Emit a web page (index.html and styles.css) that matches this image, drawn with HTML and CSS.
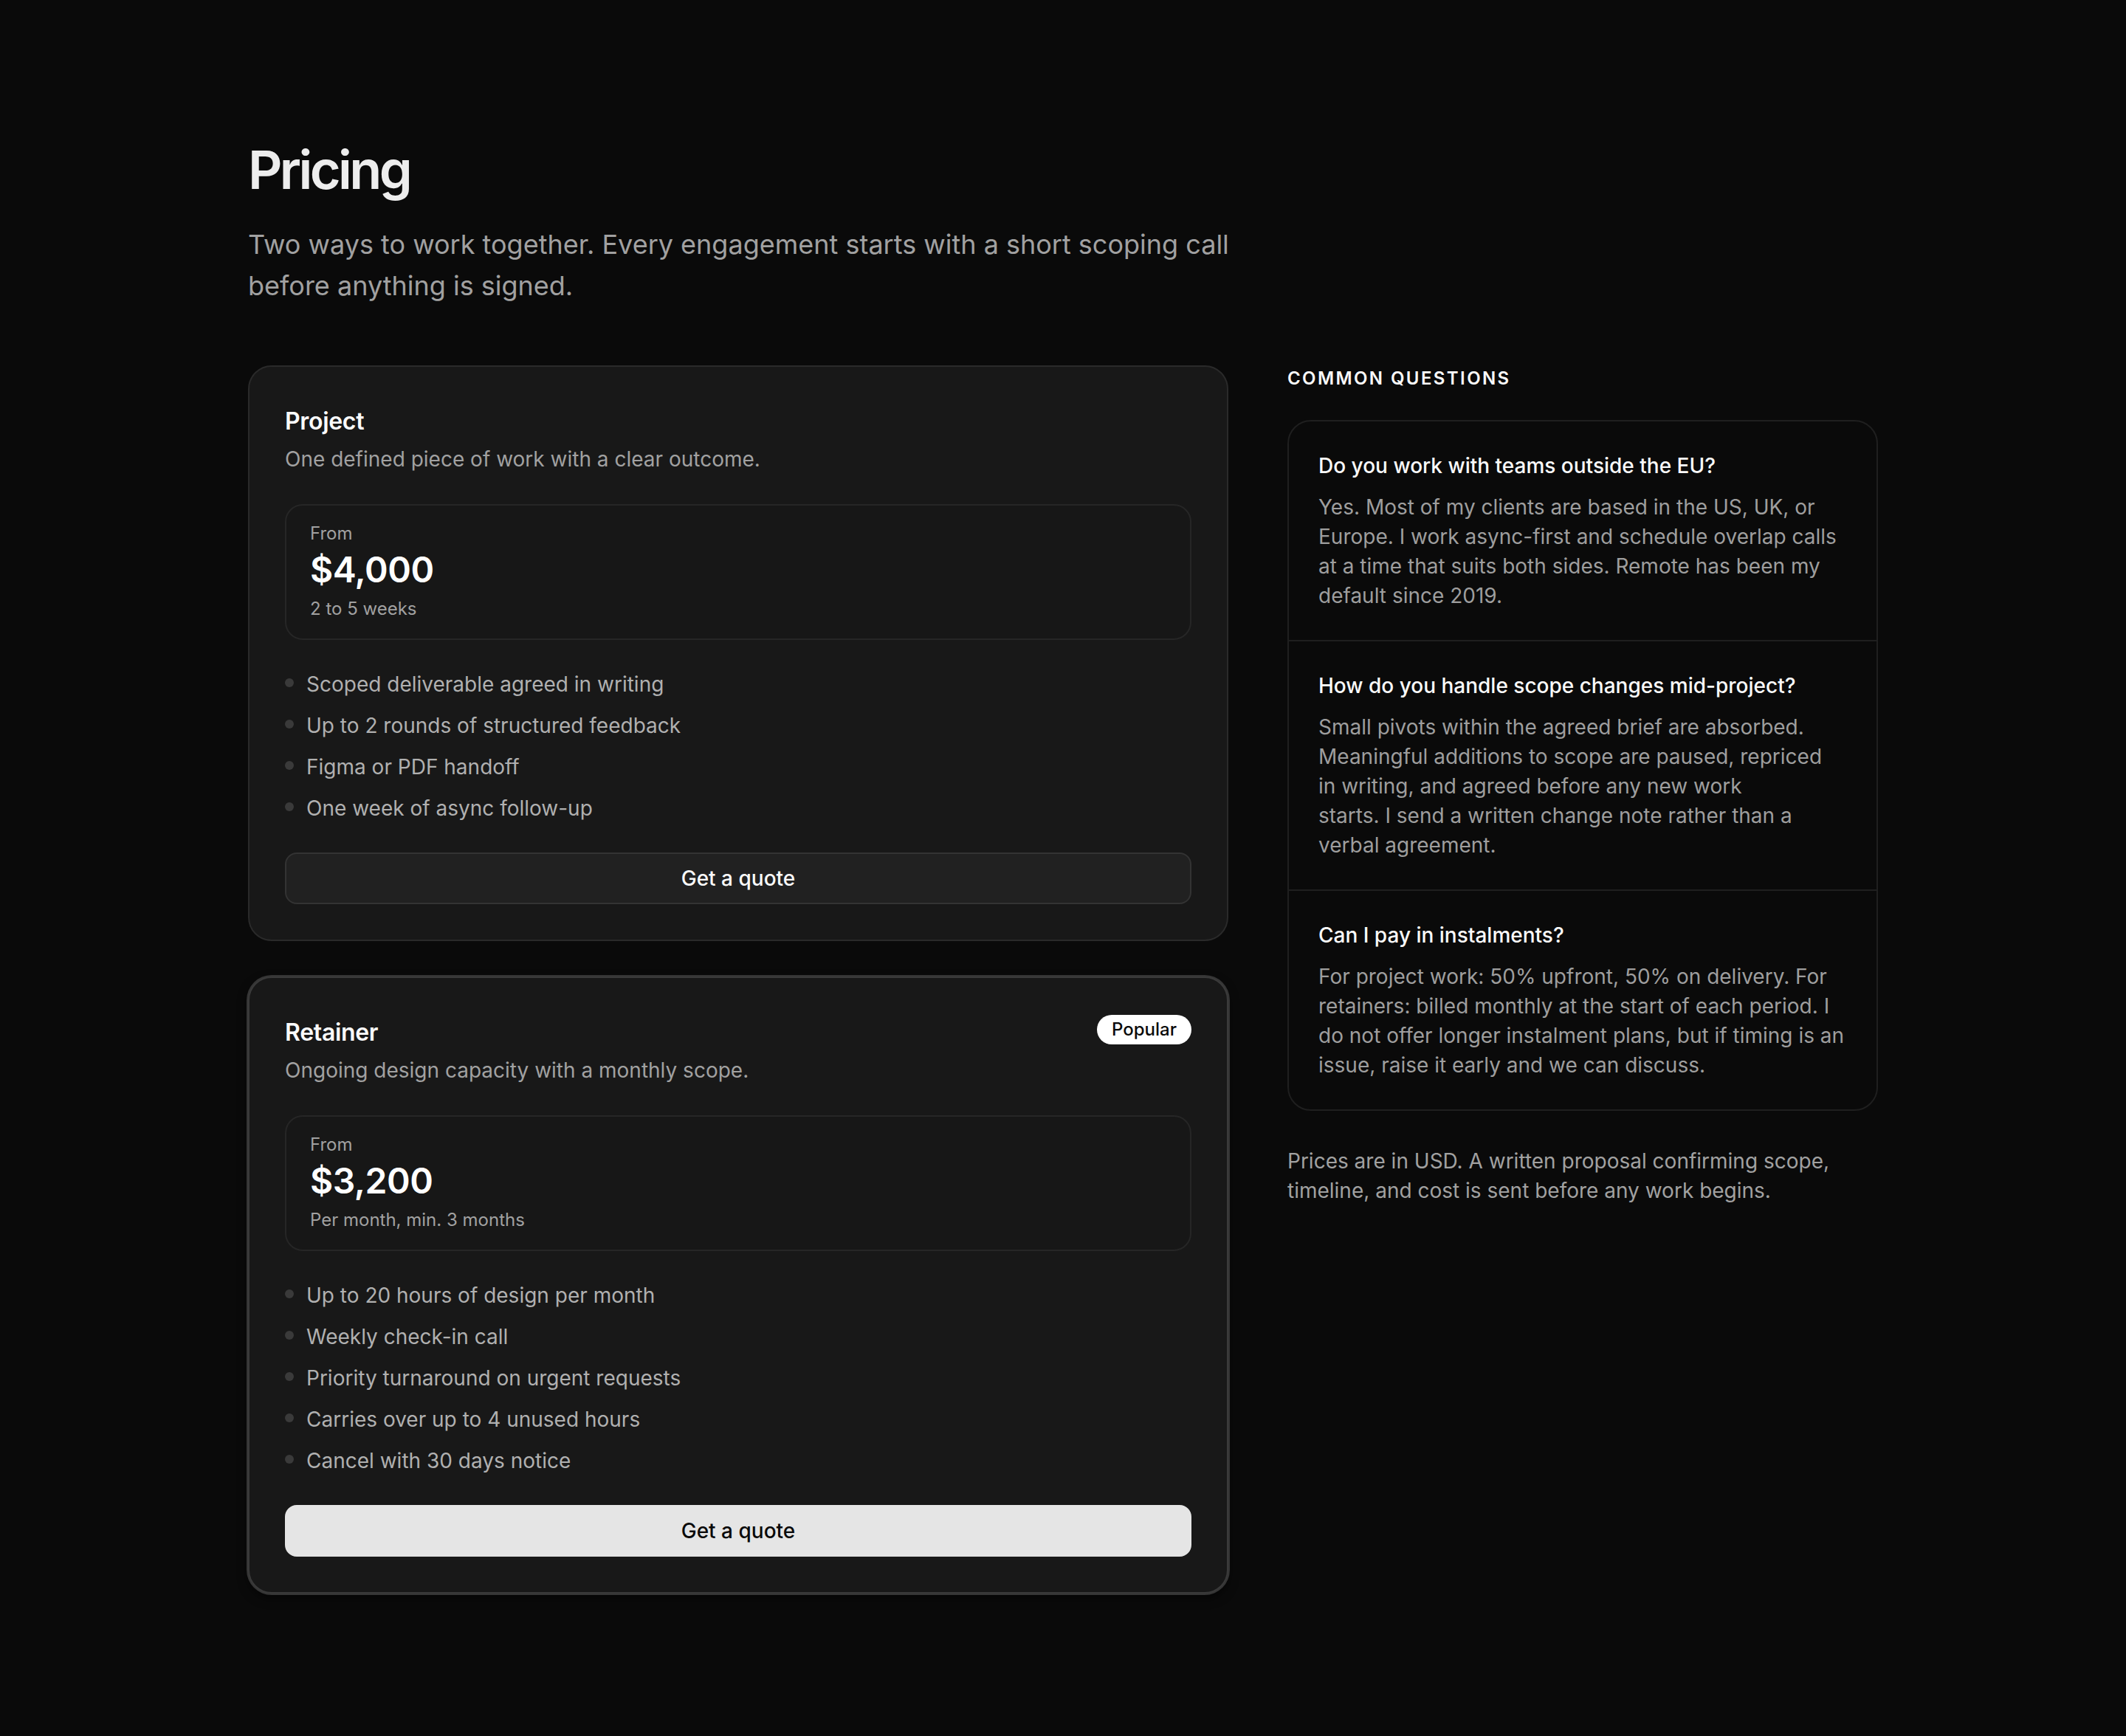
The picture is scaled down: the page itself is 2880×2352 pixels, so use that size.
FILE: index.html
```html
<!DOCTYPE html>
<html lang="en">
<head>
<meta charset="utf-8">
<title>Pricing</title>
<link rel="stylesheet" href="styles.css">
</head>
<body>
<main class="page">
  <header class="intro">
    <h1 class="intro-title">Pricing</h1>
    <p class="intro-lead">Two ways to work together. Every engagement starts with a short scoping call before anything is signed.</p>
  </header>

  <div class="layout">
    <section class="plans">
      <article class="plan">
        <div class="plan-head">
          <div>
            <h2 class="plan-name">Project</h2>
            <p class="plan-desc">One defined piece of work with a clear outcome.</p>
          </div>
        </div>
        <div class="price-box">
          <span class="price-from">From</span>
          <span class="price-value">$4,000</span>
          <span class="price-note">2 to 5 weeks</span>
        </div>
        <ul class="features">
          <li>Scoped deliverable agreed in writing</li>
          <li>Up to 2 rounds of structured feedback</li>
          <li>Figma or PDF handoff</li>
          <li>One week of async follow-up</li>
        </ul>
        <button class="btn">Get a quote</button>
      </article>

      <article class="plan plan-featured">
        <div class="plan-head">
          <div>
            <h2 class="plan-name">Retainer</h2>
            <p class="plan-desc">Ongoing design capacity with a monthly scope.</p>
          </div>
          <span class="badge">Popular</span>
        </div>
        <div class="price-box">
          <span class="price-from">From</span>
          <span class="price-value">$3,200</span>
          <span class="price-note">Per month, min. 3 months</span>
        </div>
        <ul class="features">
          <li>Up to 20 hours of design per month</li>
          <li>Weekly check-in call</li>
          <li>Priority turnaround on urgent requests</li>
          <li>Carries over up to 4 unused hours</li>
          <li>Cancel with 30 days notice</li>
        </ul>
        <button class="btn btn-primary">Get a quote</button>
      </article>
    </section>

    <aside class="faq">
      <h3 class="faq-label">COMMON QUESTIONS</h3>
      <div class="faq-box">
        <div class="faq-item">
          <h4 class="faq-q">Do you work with teams outside the EU?</h4>
          <p class="faq-a">Yes. Most of my clients are based in the US, UK, or Europe. I work async-first and schedule overlap calls at a time that suits both sides. Remote has been my default since 2019.</p>
        </div>
        <div class="faq-item">
          <h4 class="faq-q">How do you handle scope changes mid-project?</h4>
          <p class="faq-a">Small pivots within the agreed brief are absorbed. Meaningful additions to scope are paused, repriced in writing, and agreed before any new work starts. I send a written change note rather than a verbal agreement.</p>
        </div>
        <div class="faq-item">
          <h4 class="faq-q">Can I pay in instalments?</h4>
          <p class="faq-a">For project work: 50% upfront, 50% on delivery. For retainers: billed monthly at the start of each period. I do not offer longer instalment plans, but if timing is an issue, raise it early and we can discuss.</p>
        </div>
      </div>
      <p class="faq-note">Prices are in USD. A written proposal confirming scope, timeline, and cost is sent before any work begins.</p>
    </aside>
  </div>
</main>
</body>
</html>
```

FILE: styles.css
```css
* {
  box-sizing: border-box;
}

html, body {
  margin: 0;
  padding: 0;
  background: #0a0a0a;
}

body {
  font-family: Inter, "Noto Sans", "Liberation Sans", sans-serif;
  color: #fafafa;
  -webkit-font-smoothing: antialiased;
}

h1, h2, h3, h4, p, ul {
  margin: 0;
  padding: 0;
}

p {
  text-wrap: pretty;
}

.page {
  max-width: 2400px;
  margin: 0 auto;
  padding: 190px 96px 160px;
}

.intro-title {
  font-size: 72px;
  line-height: 1.1;
  font-weight: 600;
  letter-spacing: -0.05em;
  color: #ededed;
}

.intro-lead {
  margin-top: 34px;
  max-width: 1380px;
  font-size: 36px;
  line-height: 56px;
  color: #a1a1a1;
}

.layout {
  margin-top: 80px;
  display: grid;
  grid-template-columns: 1328px 800px;
  gap: 80px;
  align-items: start;
}

.plans {
  display: flex;
  flex-direction: column;
  gap: 48px;
}

.plan {
  display: flex;
  flex-direction: column;
  gap: 40px;
  padding: 50px 48px 48px;
  background: #181818;
  border: 2px solid #2a2a2a;
  border-radius: 32px;
}

.plan-featured {
  border-color: #3a3a3a;
  box-shadow: 0 0 0 2px #353535, 0 6px 14px rgba(0, 0, 0, 0.55);
}

.plan-head {
  display: flex;
  justify-content: space-between;
  align-items: flex-start;
}

.plan-name {
  font-size: 32px;
  line-height: 48px;
  font-weight: 600;
  color: #fafafa;
  letter-spacing: -0.01em;
}

.plan-desc {
  margin-top: 6px;
  font-size: 28px;
  line-height: 42px;
  color: #a1a1a1;
}

.badge {
  display: inline-block;
  padding: 6px 20px;
  font-size: 24px;
  line-height: 28px;
  font-weight: 500;
  color: #0a0a0a;
  background: #ffffff;
  border-radius: 999px;
}

.price-box {
  display: flex;
  flex-direction: column;
  padding: 20px 32px 22px;
  background: #171717;
  border: 2px solid #262626;
  border-radius: 24px;
}

.price-from,
.price-note {
  font-size: 24px;
  line-height: 36px;
  color: #a1a1a1;
}

.price-value {
  font-size: 48px;
  line-height: 62px;
  font-weight: 600;
  color: #ffffff;
  letter-spacing: -0.01em;
}

.price-note {
  margin-top: 4px;
}

.features {
  list-style: none;
  display: flex;
  flex-direction: column;
  gap: 16px;
}

.features li {
  display: flex;
  align-items: center;
  gap: 17px;
  font-size: 28px;
  line-height: 40px;
  color: #b0b0b0;
}

.features li::before {
  content: "";
  flex: none;
  width: 12px;
  height: 12px;
  margin-top: -4px;
  border-radius: 50%;
  background: #3a3a3a;
}

.btn {
  display: flex;
  align-items: center;
  justify-content: center;
  height: 70px;
  width: 100%;
  font-family: inherit;
  font-size: 28px;
  font-weight: 500;
  color: #fafafa;
  background: #212121;
  border: 2px solid #333333;
  border-radius: 16px;
  cursor: pointer;
}

.btn-primary {
  color: #0a0a0a;
  background: #e5e5e5;
  border-color: #e5e5e5;
}

.faq {
  display: flex;
  flex-direction: column;
}

.faq-label {
  font-size: 24px;
  line-height: 36px;
  font-weight: 600;
  letter-spacing: 0.1em;
  color: #fafafa;
}

.faq-box {
  margin-top: 38px;
  border: 2px solid #1f1f1f;
  border-radius: 32px;
  background: #0a0a0a;
}

.faq-item {
  padding: 40px;
}

.faq-item + .faq-item {
  border-top: 2px solid #1f1f1f;
}

.faq-q {
  font-size: 28px;
  line-height: 40px;
  font-weight: 500;
  color: #fafafa;
}

.faq-a {
  margin-top: 16px;
  font-size: 28px;
  line-height: 40px;
  color: #9e9e9e;
}

.faq-note {
  margin-top: 48px;
  font-size: 28px;
  line-height: 40px;
  color: #a1a1a1;
}
```
